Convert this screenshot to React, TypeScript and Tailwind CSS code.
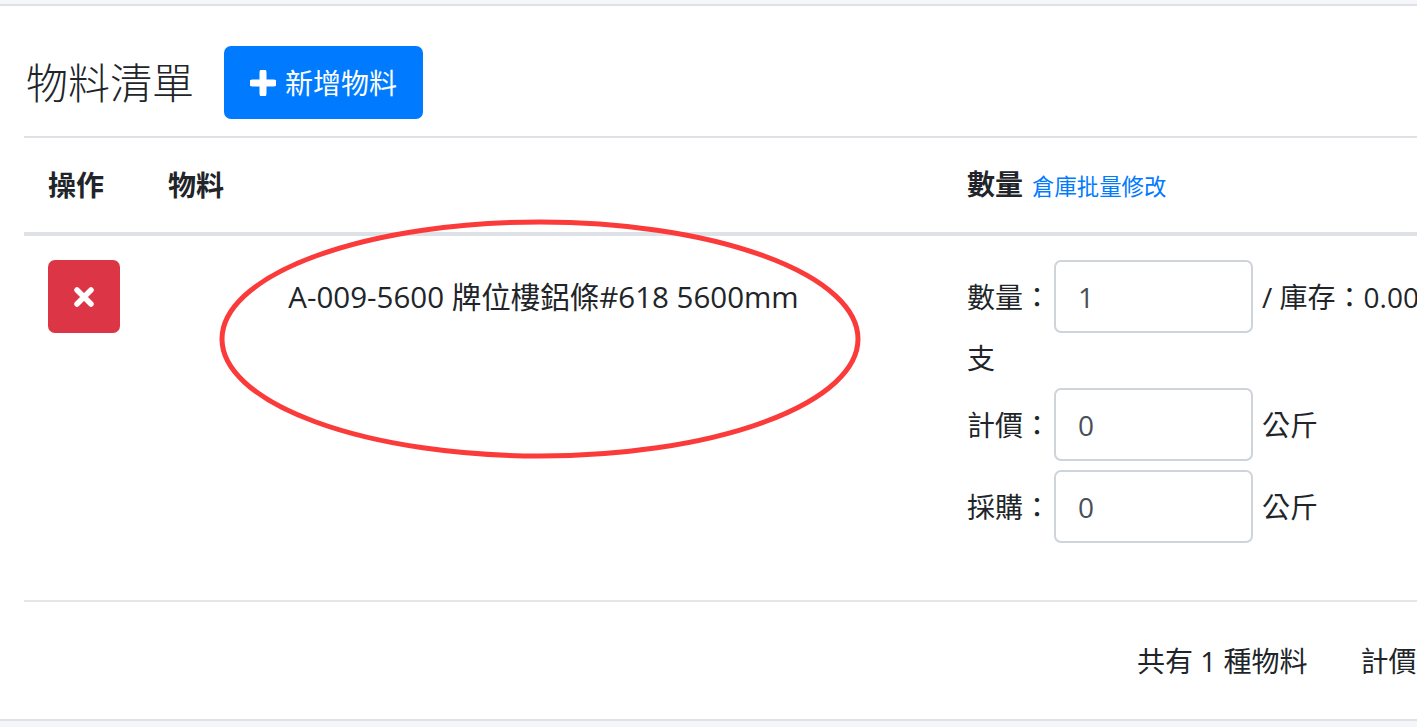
import React from "react";

const FONT = '"Open Sans", "Noto Sans CJK TC", sans-serif';

function Field({ label, value, suffix }: { label: string; value: string; suffix: React.ReactNode }) {
  return (
    <div className="flex items-center h-[73px] whitespace-nowrap">
      <span className="w-[87px] shrink-0">{label}</span>
      <div className="w-[199px] h-[73px] shrink-0 border-2 border-[#ced4da] rounded-[7px] flex items-center pl-[22px] text-[#495057] bg-white">
        {value}
      </div>
      <span className="ml-[9px] shrink-0">{suffix}</span>
    </div>
  );
}

export default function App() {
  return (
    <div
      className="relative w-[1417px] h-[727px] overflow-hidden bg-[#f4f6f9] pt-[4px] text-[#212529] text-[28px] leading-[42px]"
      style={{ fontFamily: FONT }}
    >
      <div className="w-[1900px] bg-white border-y-2 border-[#dee2e6] pl-[24px]">
        {/* Title */}
        <div className="flex items-center pt-[40px] pb-[17px]">
          <h3 className="text-[42px] leading-[50px] font-light pl-[2px]">物料清單</h3>
          <button className="ml-[30px] w-[199px] h-[73px] rounded-[7px] bg-[#007bff] text-white flex items-center justify-center gap-[9px] text-[28px]">
            <svg width="26" height="26" viewBox="0 0 26 26">
              <path d="M13 2.5 V23.5 M2.5 13 H23.5" stroke="white" strokeWidth="7" strokeLinecap="round" />
            </svg>
            <span>新增物料</span>
          </button>
        </div>

        <div className="border-t-2 border-[#dee2e6]">
          {/* Header */}
          <div className="flex font-bold h-[98px] items-center border-b-4 border-[#dee2e6]">
            <div className="w-[120px] shrink-0 pl-[24px]">操作</div>
            <div className="w-[799px] shrink-0 pl-[24px]">物料</div>
            <div className="pl-[24px] flex items-baseline">
              <span>數量</span>
              <span className="ml-[9px] text-[22.4px] font-normal text-[#007bff]">倉庫批量修改</span>
            </div>
          </div>

          {/* Row */}
          <div className="flex border-b-2 border-[#e4e6e9] pt-[24px] h-[366px]">
            <div className="w-[120px] shrink-0 pl-[24px]">
              <div className="w-[72px] h-[73px] rounded-[7px] bg-[#dc3545] flex items-center justify-center">
                <svg width="22" height="22" viewBox="0 0 22 22">
                  <path d="M4 4 L18 18 M18 4 L4 18" stroke="white" strokeWidth="5.5" strokeLinecap="round" />
                </svg>
              </div>
            </div>
            <div className="w-[799px] shrink-0 h-[73px] flex items-center justify-center text-[29.5px]">
              A-009-5600 牌位樓鋁條#618 5600mm
            </div>
            <div className="w-[700px] shrink-0 pl-[24px]">
              <Field label="數量：" value="1" suffix="/ 庫存：0.00" />
              <div className="h-[46px] mb-[9px] flex items-end">支</div>
              <div className="flex flex-col gap-[9px]">
                <Field label="計價：" value="0" suffix="公斤" />
                <Field label="採購：" value="0" suffix="公斤" />
              </div>
            </div>
          </div>

          {/* Footer */}
          <div className="h-[117px] flex items-center pl-[1113px] whitespace-nowrap">
            <span>共有 1 種物料</span>
            <span className="ml-[53px]">計價重量：0 公斤</span>
          </div>
        </div>
      </div>

      <svg className="absolute left-0 top-0 pointer-events-none" width="1417" height="727">
        <ellipse cx="540" cy="339" rx="318" ry="117" fill="none" stroke="#fb3a3a" strokeWidth="5" />
      </svg>
    </div>
  );
}
